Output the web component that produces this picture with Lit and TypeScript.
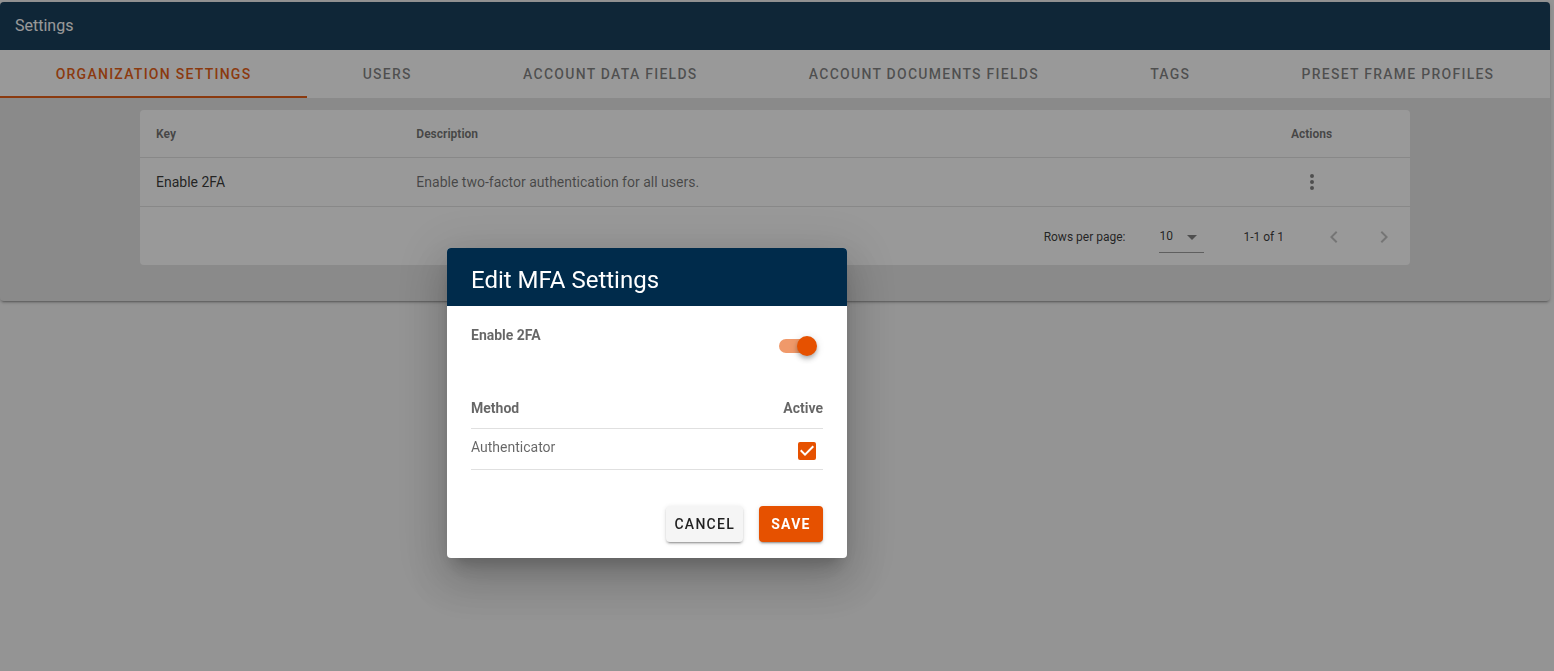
import { LitElement, html, css } from "lit";
import { customElement, state } from "lit/decorators.js";
import { classMap } from "lit/directives/class-map.js";

const TABS = [
  "Organization Settings",
  "Users",
  "Account Data Fields",
  "Account Documents Fields",
  "Tags",
  "Preset Frame Profiles",
];

const SETTINGS = [
  { key: "Enable 2FA", description: "Enable two-factor authentication for all users." },
];

@customElement("settings-table")
class SettingsTable extends LitElement {
  static styles = css`
    :host {
      display: block;
      background: #fff;
      border-radius: 4px;
      color: rgba(0, 0, 0, 0.87);
    }
    * { box-sizing: border-box; }
    .table {
      width: 100%;
      table-layout: fixed;
      border-collapse: separate;
      border-spacing: 0;
      text-align: left;
    }
    .head, .cell {
      height: 48px;
      padding: 0 16px;
      border-bottom: 1px solid rgba(0, 0, 0, 0.12);
    }
    .head { font-size: 12px; line-height: 16px; font-weight: 700; color: rgba(0, 0, 0, 0.6); }
    .cell { height: 49px; font-size: 14px; line-height: 20px; }
    .key { width: 20.5%; }
    .actions { width: 15.5%; text-align: center; }
    .muted { color: rgba(0, 0, 0, 0.6); }
    .icon-button {
      display: inline-grid;
      place-items: center;
      width: 36px;
      height: 36px;
      padding: 0;
      border: 0;
      border-radius: 50%;
      background: none;
      color: rgba(0, 0, 0, 0.54);
      vertical-align: middle;
    }
    .icon-button:disabled { color: rgba(0, 0, 0, 0.26); }
    .icon { width: 24px; height: 24px; fill: currentColor; }
    .footer {
      display: flex;
      align-items: center;
      justify-content: flex-end;
      padding: 13px 8px 12px;
      font-size: 12px;
      line-height: 16px;
    }
    .picker { display: grid; width: 45px; height: 33px; margin: 0 39px 0 34px; }
    .picker > * { grid-area: 1 / 1; }
    .picker .icon { justify-self: end; align-self: center; pointer-events: none; color: rgba(0, 0, 0, 0.54); }
    .select {
      appearance: none;
      width: 100%;
      padding: 0;
      border: 0;
      border-bottom: 1px solid rgba(0, 0, 0, 0.42);
      border-radius: 0;
      background: none;
      color: inherit;
      font: inherit;
    }
    .range { margin-right: 32px; }
    .pager { display: flex; gap: 14px; height: 33px; align-items: center; }
  `;

  render() {
    return html`
      <table class="table">
        <thead>
          <tr>
            <th class="head key" scope="col">Key</th>
            <th class="head" scope="col">Description</th>
            <th class="head actions" scope="col">Actions</th>
          </tr>
        </thead>
        <tbody>
          ${SETTINGS.map((s) => html`
            <tr>
              <td class="cell">${s.key}</td>
              <td class="cell muted">${s.description}</td>
              <td class="cell actions">
                <button class="icon-button" aria-label="Actions for ${s.key}">
                  <svg class="icon" viewBox="0 0 24 24"><path d="M12,16A2,2 0 0,1 14,18A2,2 0 0,1 12,20A2,2 0 0,1 10,18A2,2 0 0,1 12,16M12,10A2,2 0 0,1 14,12A2,2 0 0,1 12,14A2,2 0 0,1 10,12A2,2 0 0,1 12,10M12,4A2,2 0 0,1 14,6A2,2 0 0,1 12,8A2,2 0 0,1 10,6A2,2 0 0,1 12,4Z"/></svg>
                </button>
              </td>
            </tr>`)}
        </tbody>
      </table>
      <div class="footer">
        <label for="rows">Rows per page:</label>
        <div class="picker">
          <select class="select" id="rows">
            <option>5</option>
            <option selected>10</option>
            <option>15</option>
          </select>
          <svg class="icon" viewBox="0 0 24 24"><path d="M7,10L12,15L17,10H7Z"/></svg>
        </div>
        <span class="range">1-1 of 1</span>
        <div class="pager">
          <button class="icon-button" disabled aria-label="Previous page">
            <svg class="icon" viewBox="0 0 24 24"><path d="M15.41,16.58L10.83,12L15.41,7.41L14,6L8,12L14,18L15.41,16.58Z"/></svg>
          </button>
          <button class="icon-button" disabled aria-label="Next page">
            <svg class="icon" viewBox="0 0 24 24"><path d="M8.59,16.58L13.17,12L8.59,7.41L10,6L16,12L10,18L8.59,16.58Z"/></svg>
          </button>
        </div>
      </div>
    `;
  }
}

@customElement("mfa-dialog")
class MfaDialog extends LitElement {
  static styles = css`
    :host {
      display: block;
      width: 400px;
      max-width: 100%;
      overflow: hidden;
      border-radius: 4px;
      background: #fff;
      color: rgba(0, 0, 0, 0.6);
      font-size: 14px;
      line-height: 22px;
      box-shadow: 0 11px 15px -7px rgba(0, 0, 0, 0.2), 0 24px 38px 3px rgba(0, 0, 0, 0.14),
        0 9px 46px 8px rgba(0, 0, 0, 0.12);
    }
    * { box-sizing: border-box; }
    .title {
      margin: 0;
      padding: 16px 24px 10px;
      background: #002b4b;
      color: #fff;
      font-size: 24px;
      line-height: 32px;
      font-weight: 400;
    }
    .body { padding: 18px 24px 0; }
    .toggle { display: flex; justify-content: space-between; font-weight: 700; }
    .switch {
      appearance: none;
      display: flex;
      align-items: center;
      width: 36px;
      height: 14px;
      margin: 15px 8px 0 0;
      border-radius: 8px;
      background: #f0996a;
    }
    .switch::before {
      content: "";
      flex: none;
      width: 20px;
      height: 20px;
      margin-left: -2px;
      border-radius: 50%;
      background: #fff;
      box-shadow: 0 2px 4px -1px rgba(0, 0, 0, 0.2), 0 4px 5px 0 rgba(0, 0, 0, 0.14),
        0 1px 10px 0 rgba(0, 0, 0, 0.12);
    }
    .switch:not(:checked) { background: rgba(0, 0, 0, 0.38); }
    .switch:checked::before { margin-left: 18px; background: #e65100; }
    .methods { width: 100%; margin-top: 44px; border-collapse: separate; border-spacing: 0; text-align: left; }
    .cell { padding: 0; border-bottom: 1px solid rgba(0, 0, 0, 0.12); vertical-align: top; }
    .head { height: 32px; }
    .row { height: 41px; padding-top: 7px; }
    .end { text-align: right; }
    .check { display: inline-grid; margin: 3px 4px 0 0; vertical-align: top; }
    .check > * { grid-area: 1 / 1; }
    .box {
      appearance: none;
      width: 18px;
      height: 18px;
      margin: 3px;
      border: 2px solid rgba(0, 0, 0, 0.54);
      border-radius: 2px;
    }
    .box:checked { border-color: #e65100; background: #e65100; }
    .tick { width: 24px; height: 24px; fill: #fff; pointer-events: none; }
    .actions { display: flex; justify-content: flex-end; gap: 16px; padding: 36px 24px 16px; }
    .button {
      min-width: 64px;
      height: 36px;
      padding: 0 8px;
      border: 0;
      border-radius: 4px;
      background: #f5f5f5;
      color: rgba(0, 0, 0, 0.87);
      font: inherit;
      font-weight: 500;
      letter-spacing: 0.09em;
      text-transform: uppercase;
      box-shadow: 0 3px 1px -2px rgba(0, 0, 0, 0.2), 0 2px 2px 0 rgba(0, 0, 0, 0.14),
        0 1px 5px 0 rgba(0, 0, 0, 0.12);
    }
    .primary { background: #e65100; color: #fff; font-weight: 700; }
  `;

  render() {
    return html`
      <h2 class="title">Edit MFA Settings</h2>
      <div class="body">
        <div class="toggle">
          <label for="enable">Enable 2FA</label>
          <input class="switch" id="enable" type="checkbox" role="switch" checked />
        </div>
        <table class="methods">
          <thead>
            <tr>
              <th class="cell head" scope="col">Method</th>
              <th class="cell head end" scope="col">Active</th>
            </tr>
          </thead>
          <tbody>
            <tr>
              <td class="cell row"><label for="authenticator">Authenticator</label></td>
              <td class="cell row end">
                <span class="check">
                  <input class="box" id="authenticator" type="checkbox" checked />
                  <svg class="tick" viewBox="0 0 24 24"><path d="M10,17L5,12L6.41,10.58L10,14.17L17.59,6.58L19,8Z"/></svg>
                </span>
              </td>
            </tr>
          </tbody>
        </table>
      </div>
      <div class="actions">
        <button class="button">Cancel</button>
        <button class="button primary">Save</button>
      </div>
    `;
  }
}

@customElement("app-root")
class AppRoot extends LitElement {
  static styles = css`
    :host {
      display: block;
      min-height: 100vh;
      padding: 2px 4px 0 0;
      box-sizing: border-box;
      background: #f6f6f6;
      font-family: Roboto, "Liberation Sans", sans-serif;
    }
    * { box-sizing: border-box; }
    .panel {
      overflow: hidden;
      border-radius: 4px;
      background: #e4e4e4;
      box-shadow: 0 3px 1px -2px rgba(0, 0, 0, 0.2), 0 2px 2px 0 rgba(0, 0, 0, 0.14),
        0 1px 5px 0 rgba(0, 0, 0, 0.12);
    }
    .bar {
      margin: 0;
      padding: 12px 15px;
      background: #002b4b;
      color: #fff;
      font-size: 16px;
      line-height: 24px;
      font-weight: 400;
    }
    .tabs { display: flex; background: #fff; }
    .tab {
      flex: 1 1 auto;
      height: 48px;
      padding: 2px 16px 0;
      border: 0;
      border-bottom: 2px solid transparent;
      background: none;
      color: rgba(0, 0, 0, 0.54);
      font: inherit;
      font-size: 14px;
      line-height: 20px;
      font-weight: 500;
      letter-spacing: 0.09em;
      text-transform: uppercase;
      white-space: nowrap;
    }
    .active { border-color: #e65100; color: #e65100; }
    .content { padding: 12px 140px 36px; }
    .overlay {
      position: fixed;
      inset: 0;
      display: flex;
      align-items: center;
      justify-content: center;
      padding: 135px 260px 0 0;
      background: rgba(33, 33, 33, 0.46);
    }
  `;

  @state() private current = 0;

  render() {
    return html`
      <main class="panel">
        <h1 class="bar">Settings</h1>
        <div class="tabs" role="tablist">
          ${TABS.map((label, i) => html`
            <button
              class=${classMap({ tab: true, active: i === this.current })}
              role="tab"
              aria-selected=${i === this.current}
              @click=${() => (this.current = i)}
            >${label}</button>`)}
        </div>
        <div class="content"><settings-table></settings-table></div>
      </main>
      <div class="overlay">
        <mfa-dialog role="dialog" aria-modal="true" aria-label="Edit MFA Settings"></mfa-dialog>
      </div>
    `;
  }
}
